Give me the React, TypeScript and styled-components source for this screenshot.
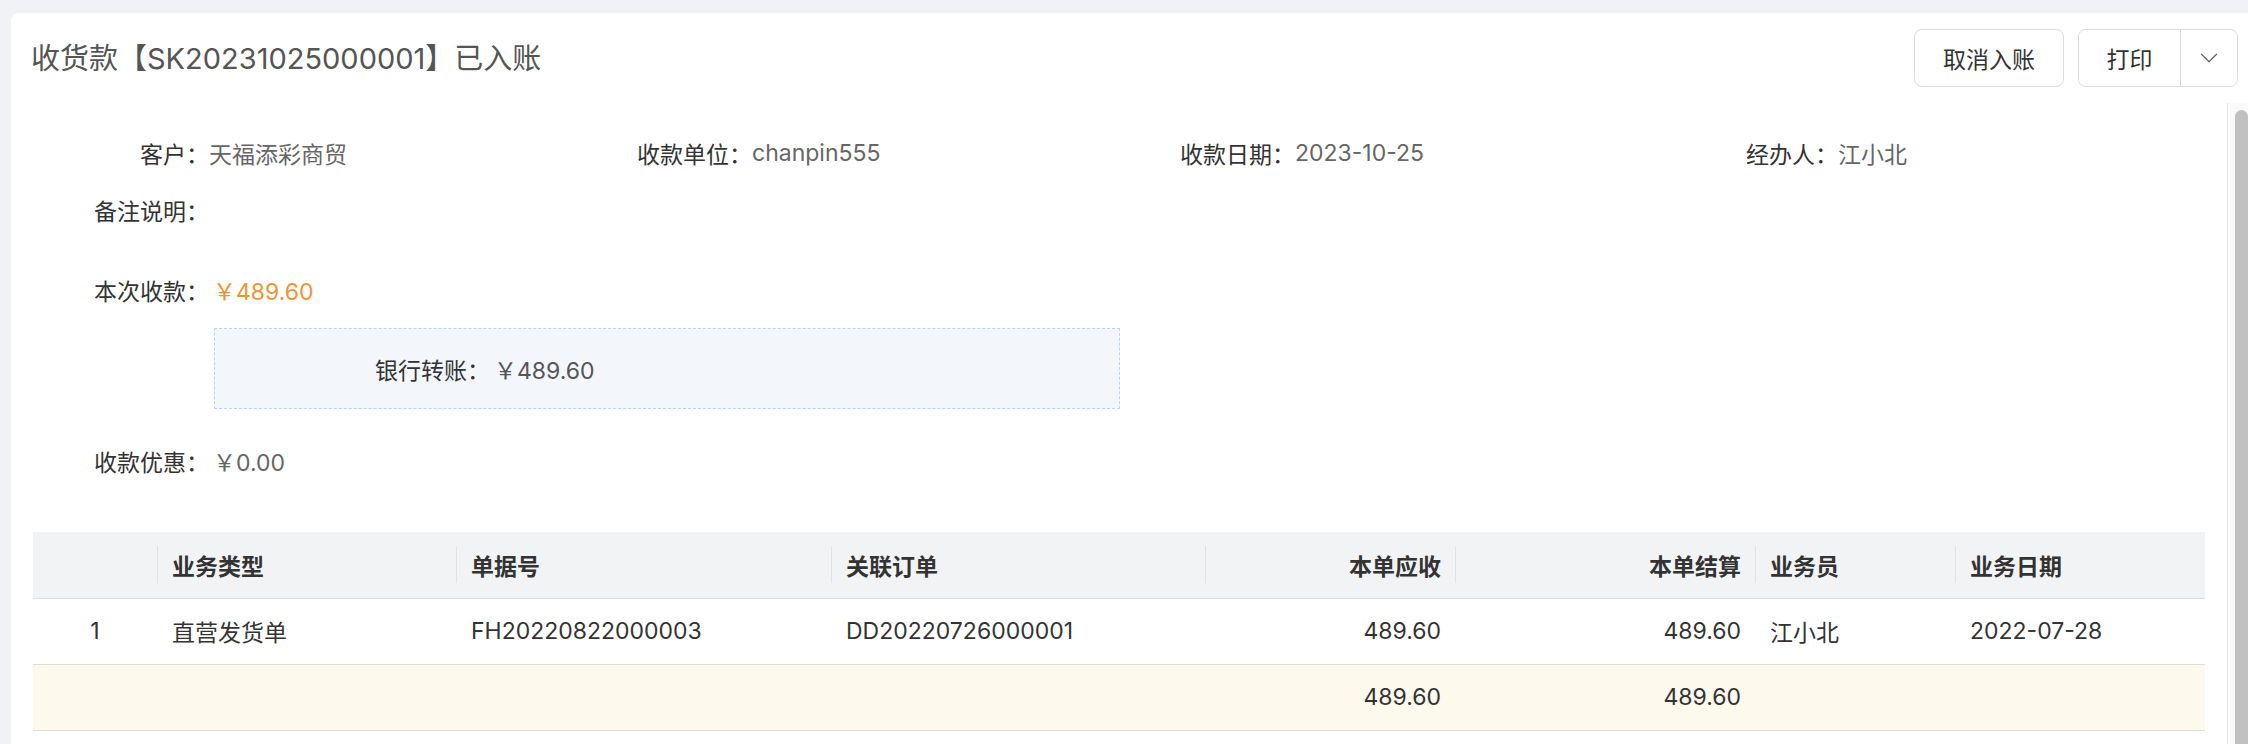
import React from "react";
import styled, { createGlobalStyle } from "styled-components";

const GlobalStyle = createGlobalStyle`
  html, body {
    margin: 0;
    padding: 0;
    height: 744px;
    overflow: hidden;
    background: #f0f2f5;
  }
  body {
    font-family: Inter, "Noto Sans CJK SC", sans-serif;
    color: #333;
  }
  * { box-sizing: border-box; }
`;

const Page = styled.div`
  padding: 13px 0 0 11px;
`;

const Card = styled.div`
  width: 2244px;
  background: #fff;
  border-radius: 8px;
`;

const Header = styled.div`
  display: flex;
  justify-content: space-between;
  align-items: flex-start;
  height: 90px;
  padding: 0 17px 0 20px;
`;

const Title = styled.h1`
  margin: 26px 0 0;
  font-size: 29px;
  font-weight: 400;
  line-height: 40px;
  color: #555;
`;

const Actions = styled.div`
  display: flex;
  gap: 14px;
  margin-top: 16px;
`;

const Button = styled.button`
  height: 58px;
  padding: 0 28px;
  border: 1px solid #dcdcdc;
  border-radius: 8px;
  background: #fff;
  font-family: inherit;
  font-size: 23px;
  color: #333;
`;

const SplitButton = styled.div`
  display: flex;
  height: 58px;
  border: 1px solid #dcdcdc;
  border-radius: 8px;
  overflow: hidden;
`;

const SplitPart = styled.button<{ $w: number; $divider?: boolean }>`
  width: ${(p) => p.$w}px;
  height: 100%;
  border: none;
  border-right: ${(p) => (p.$divider ? "1px solid #dcdcdc" : "none")};
  background: #fff;
  font-family: inherit;
  font-size: 23px;
  color: #333;
  display: flex;
  align-items: center;
  justify-content: center;
  padding: 0;
`;

const ScrollArea = styled.div`
  display: flex;
  height: 680px;
  overflow: hidden;
`;

const ScrollTrack = styled.div`
  flex: 0 0 28px;
  padding: 7px 7px 0 7px;
  background: #fafafa;
  border-left: 1px solid #e6e6e6;
`;

const ScrollThumb = styled.div`
  height: 700px;
  border-radius: 12px;
  background: #c1c1c1;
`;

const Content = styled.div`
  flex: 1;
  min-width: 0;
  padding: 30px 22px 0;
  font-size: 23px;
`;

const InfoGrid = styled.div`
  display: grid;
  grid-template-columns: repeat(4, 1fr);
  row-gap: 17px;
`;

const InfoItem = styled.div<{ $full?: boolean; $mt?: number }>`
  display: flex;
  align-items: center;
  height: 40px;
  grid-column: ${(p) => (p.$full ? "1 / -1" : "auto")};
  margin-top: ${(p) => p.$mt ?? 0}px;
`;

const Label = styled.span<{ $w?: number }>`
  flex-shrink: 0;
  width: ${(p) => p.$w ?? 176}px;
  text-align: right;
  color: #333;
`;

const Value = styled.span<{ $color?: string }>`
  color: ${(p) => p.$color ?? "#666"};
`;

const Money = styled(Value)`
  padding-left: 4px;
`;

const PayBox = styled.div`
  display: flex;
  align-items: center;
  width: 906px;
  height: 81px;
  margin: 18px 0 0 181px;
  border: 1px dashed #b8d5f5;
  background: #f3f7fc;
`;

const Table = styled.table`
  width: 100%;
  margin-top: 51px;
  border-collapse: collapse;
  table-layout: fixed;
  font-size: 23px;
`;

const Th = styled.th<{ $align?: string; $sep?: boolean }>`
  position: relative;
  height: 66px;
  padding: ${(p) => (p.$align === "right" ? "0 14px 0 15px" : "0 15px")};
  background: #f2f3f5;
  border-bottom: 1px solid #dedede;
  text-align: ${(p) => p.$align ?? "left"};
  font-weight: 600;
  color: #333;
  &::before {
    content: "";
    display: ${(p) => (p.$sep ? "block" : "none")};
    position: absolute;
    left: 0;
    top: 14px;
    bottom: 15px;
    width: 1px;
    background: #e3e3e3;
  }
`;

const Tr = styled.tr<{ $summary?: boolean }>`
  background: ${(p) => (p.$summary ? "#fdf9ec" : "#fff")};
`;

const Td = styled.td<{ $align?: string }>`
  height: 66px;
  padding: ${(p) => (p.$align === "right" ? "0 14px 0 15px" : "0 15px")};
  border-bottom: 1px solid #dedede;
  text-align: ${(p) => p.$align ?? "left"};
  color: #333;
`;

const Chevron = () => (
  <svg width="30" height="30" viewBox="0 0 24 24" fill="none" stroke="#666" strokeWidth="1" strokeLinecap="round" strokeLinejoin="round">
    <path d="m6 9 6 6 6-6" />
  </svg>
);

const columns = [
  { key: "idx", title: "", width: 124, align: "center" },
  { key: "type", title: "业务类型", width: 299 },
  { key: "no", title: "单据号", width: 375 },
  { key: "order", title: "关联订单", width: 374 },
  { key: "due", title: "本单应收", width: 250, align: "right" },
  { key: "settle", title: "本单结算", width: 300, align: "right" },
  { key: "staff", title: "业务员", width: 200 },
  { key: "date", title: "业务日期", width: 250 },
];

const rows: Record<string, string>[] = [
  {
    idx: "1",
    type: "直营发货单",
    no: "FH20220822000003",
    order: "DD20220726000001",
    due: "489.60",
    settle: "489.60",
    staff: "江小北",
    date: "2022-07-28",
  },
];

const summary: Record<string, string> = { due: "489.60", settle: "489.60" };

export default function App() {
  return (
    <>
      <GlobalStyle />
      <Page>
        <Card>
          <Header>
            <Title>收货款【SK20231025000001】已入账</Title>
            <Actions>
              <Button>取消入账</Button>
              <SplitButton>
                <SplitPart $w={102} $divider>打印</SplitPart>
                <SplitPart $w={56}>
                  <Chevron />
                </SplitPart>
              </SplitButton>
            </Actions>
          </Header>
          <ScrollArea>
            <Content>
              <InfoGrid>
                <InfoItem>
                  <Label>客户：</Label>
                  <Value>天福添彩商贸</Value>
                </InfoItem>
                <InfoItem>
                  <Label>收款单位：</Label>
                  <Value>chanpin555</Value>
                </InfoItem>
                <InfoItem>
                  <Label>收款日期：</Label>
                  <Value>2023-10-25</Value>
                </InfoItem>
                <InfoItem>
                  <Label>经办人：</Label>
                  <Value>江小北</Value>
                </InfoItem>
                <InfoItem $full>
                  <Label>备注说明：</Label>
                  <Value></Value>
                </InfoItem>
              </InfoGrid>
              <InfoItem $mt={40}>
                <Label>本次收款：</Label>
                <Money $color="#f39330">￥489.60</Money>
              </InfoItem>
              <PayBox>
                <Label $w={275}>银行转账：</Label>
                <Money $color="#555">￥489.60</Money>
              </PayBox>
              <InfoItem $mt={32}>
                <Label>收款优惠：</Label>
                <Money>￥0.00</Money>
              </InfoItem>
              <Table>
                <colgroup>
                  {columns.map((c) => (
                    <col key={c.key} style={{ width: c.width }} />
                  ))}
                </colgroup>
                <thead>
                  <tr>
                    {columns.map((c, i) => (
                      <Th key={c.key} $align={c.align} $sep={i > 0}>
                        {c.title}
                      </Th>
                    ))}
                  </tr>
                </thead>
                <tbody>
                  {rows.map((r, ri) => (
                    <Tr key={ri}>
                      {columns.map((c) => (
                        <Td key={c.key} $align={c.align}>
                          {r[c.key]}
                        </Td>
                      ))}
                    </Tr>
                  ))}
                  <Tr $summary>
                    {columns.map((c) => (
                      <Td key={c.key} $align={c.align}>
                        {summary[c.key] ?? ""}
                      </Td>
                    ))}
                  </Tr>
                </tbody>
              </Table>
            </Content>
            <ScrollTrack>
              <ScrollThumb />
            </ScrollTrack>
          </ScrollArea>
        </Card>
      </Page>
    </>
  );
}
